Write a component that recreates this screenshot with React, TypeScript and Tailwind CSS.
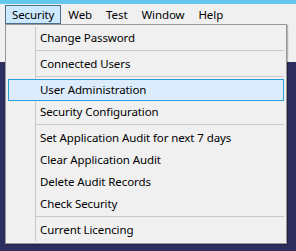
import React from 'react';

type Entry = { label: string; active?: boolean } | 'sep';

const topMenus = ['Security', 'Web', 'Test', 'Window', 'Help'];

const entries: Entry[] = [
  { label: 'Change Password' },
  'sep',
  { label: 'Connected Users' },
  'sep',
  { label: 'User Administration', active: true },
  { label: 'Security Configuration' },
  'sep',
  { label: 'Set Application Audit for next 7 days' },
  { label: 'Clear Application Audit' },
  { label: 'Delete Audit Records' },
  { label: 'Check Security' },
  'sep',
  { label: 'Current Licencing' },
];

export default function App() {
  return (
    <div
      className="relative w-[296px] h-[251px] bg-[#2d2f5e] overflow-hidden text-[11.5px] tracking-[-0.1px] text-black"
      style={{ fontFamily: '"Noto Sans", "Open Sans", sans-serif' }}
    >
      {/* title strip */}
      <div className="h-[4px] bg-[#64c8ee]" />

      {/* menu bar + toolbar area */}
      <div className="h-[58px] bg-[#f0f0f0]">
        <div className="flex pl-[5px] pt-[1px]">
          {topMenus.map((m, i) => (
            <div
              key={m}
              className={
                i === 0
                  ? 'h-[19px] px-[6px] flex items-center border border-[#4a6d8c] bg-[#cce8ff]'
                  : 'h-[19px] px-[6px] flex items-center border border-transparent'
              }
            >
              {m}
            </div>
          ))}
        </div>
      </div>

      {/* dropdown */}
      <div className="absolute left-[5px] top-[24px] w-[282px] border border-[#979797] bg-[#f0f0f0] p-[2px] shadow-[1px_1px_1px_rgba(0,0,0,0.25)]">
        {entries.map((e, i) =>
          e === 'sep' ? (
            <div key={i} className="flex h-[4px]">
              <div className="w-[28px] border-r border-[#c8c8c8]" />
              <div className="flex-1 pt-[1px]">
                <div className="h-[1px] bg-[#c8c8c8]" />
              </div>
            </div>
          ) : e.active ? (
            <div
              key={i}
              className="h-[22px] flex items-center pl-[31px] border border-[#26a0da] bg-[#dcecfc]"
            >
              {e.label}
            </div>
          ) : (
            <div key={i} className="h-[22px] flex items-center">
              <div className="w-[28px] h-full border-r border-[#c8c8c8]" />
              <span className="pl-[4px]">{e.label}</span>
            </div>
          )
        )}
      </div>
    </div>
  );
}
